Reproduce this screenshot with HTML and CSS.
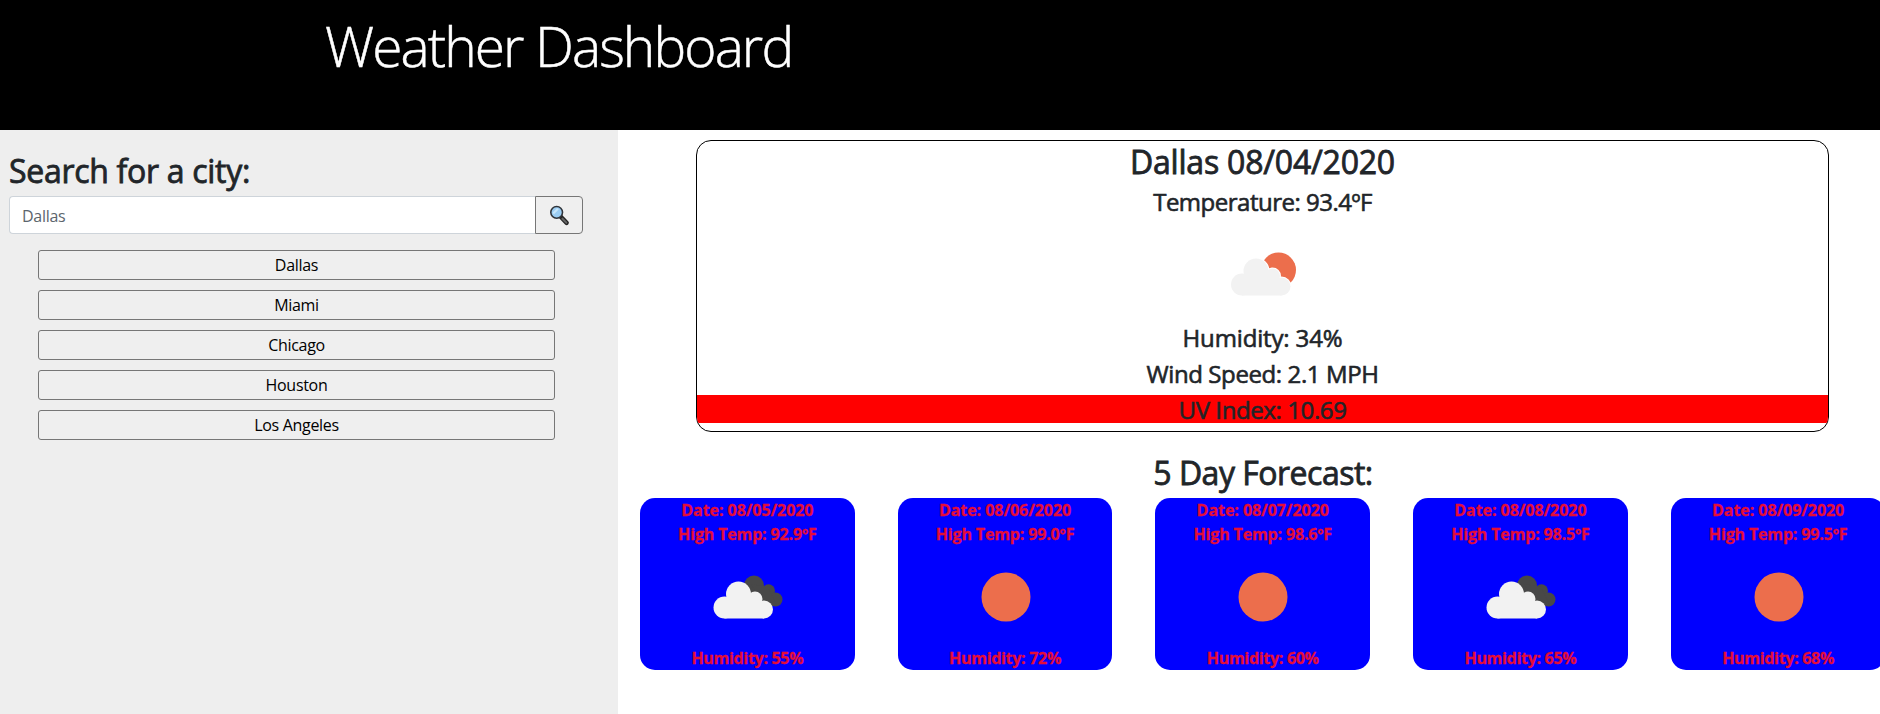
FILE: index.html
```html
<!DOCTYPE html>
<html lang="en">
<head>
<meta charset="utf-8">
<title>Weather Dashboard</title>
<link rel="stylesheet" href="styles.css">
</head>
<body>
<svg class="defs" width="0" height="0" aria-hidden="true">
  <symbol id="sun" viewBox="0 0 100 100"><circle cx="50" cy="50" r="24.500" fill="#ec6e4c"/></symbol>
  <symbol id="cloud" viewBox="0 0 100 100">
    <circle cx="26.500" cy="60.500" r="11"/><circle cx="40.500" cy="47" r="12.500"/><circle cx="57" cy="52" r="7.500"/><circle cx="66" cy="62.500" r="9"/><path d="M26.500 52L40 42L57 50L66 58V71.500H26.500z"/>
  </symbol>
  <symbol id="few" viewBox="0 0 100 100">
    <circle cx="65.500" cy="46" r="17.500" fill="#ec6e4c"/>
    <use href="#cloud" x="2.500" width="100" height="100" fill="#fff" stroke="#fff" stroke-width="2"/>
    <use href="#cloud" x="2.500" width="100" height="100" fill="#f2f2f2"/>
  </symbol>
  <symbol id="broken" viewBox="0 0 100 100">
    <g fill="#484848"><circle cx="56" cy="38.500" r="10"/><circle cx="70.500" cy="43.800" r="6.500"/><circle cx="77.500" cy="52.500" r="7"/><path d="M53 37L70 40L79 59H66z"/></g>
    <use href="#cloud" width="100" height="100" fill="#f2f2f2"/>
  </symbol>
</svg>
<header class="banner"><h1 class="title">Weather Dashboard</h1></header>
<div class="layout">
  <aside class="sidebar">
    <h2 class="heading search-heading">Search for a city:</h2>
    <div class="search">
      <input class="search-input" type="text" placeholder="Dallas">
      <button class="search-button" aria-label="Search">
        <svg width="21" height="21" viewBox="0 0 20 20"><path d="M11 11L16.800 17" stroke="#222" stroke-width="4.200" stroke-linecap="round"/><path d="M12.800 13L16.500 16.800" stroke="#666" stroke-width="2" stroke-linecap="round"/><circle cx="7.300" cy="7" r="5.600" fill="#9bcdf3" stroke="#30343a" stroke-width="1.500"/><path d="M4 8L8.500 3.500" stroke="#c8e6fb" stroke-width="2"/></svg>
      </button>
    </div>
    <div class="cities">
      <button class="city">Dallas</button>
      <button class="city">Miami</button>
      <button class="city">Chicago</button>
      <button class="city">Houston</button>
      <button class="city">Los Angeles</button>
    </div>
  </aside>
  <main class="main">
    <section class="current">
      <h2 class="heading place">Dallas 08/04/2020</h2>
      <p class="stat temperature">Temperature: 93.4ºF</p>
      <svg class="icon"><use href="#few"/></svg>
      <p class="stat humidity">Humidity: 34%</p>
      <p class="stat wind">Wind Speed: 2.1 MPH</p>
      <p class="stat uv">UV Index: 10.69</p>
    </section>
    <h2 class="heading forecast-heading">5 Day Forecast:</h2>
    <section class="forecast">
      <article class="day"><p class="date">Date: 08/05/2020</p><p class="temp">High Temp: 92.9ºF</p><svg class="icon"><use href="#broken"/></svg><p>Humidity: 55%</p></article>
      <article class="day"><p class="date">Date: 08/06/2020</p><p class="temp">High Temp: 99.0ºF</p><svg class="icon"><use href="#sun"/></svg><p>Humidity: 72%</p></article>
      <article class="day"><p class="date">Date: 08/07/2020</p><p class="temp">High Temp: 98.6ºF</p><svg class="icon"><use href="#sun"/></svg><p>Humidity: 60%</p></article>
      <article class="day"><p class="date">Date: 08/08/2020</p><p class="temp">High Temp: 98.5ºF</p><svg class="icon"><use href="#broken"/></svg><p>Humidity: 65%</p></article>
      <article class="day"><p class="date">Date: 08/09/2020</p><p class="temp">High Temp: 99.5ºF</p><svg class="icon"><use href="#sun"/></svg><p>Humidity: 68%</p></article>
    </section>
  </main>
</div>
</body>
</html>
```
FILE: styles.css
```css
* { box-sizing: border-box; }
body { margin: 0; height: 714px; overflow: hidden; display: flex; flex-direction: column; background: #fff; color: #212529; font: 16px/24px "Open Sans", "Noto Sans", sans-serif; }
h1, h2, p { margin: 0; }
.defs { position: absolute; }
.banner { height: 130px; flex: none; background: #000; padding: 12px 0 0 325px; }
.title { color: #fff; font-size: 55px; line-height: 67px; font-weight: 300; letter-spacing: -1.900px; white-space: nowrap; -webkit-text-stroke: 0.5px #fff; }
.layout { flex: 1; display: flex; }
.sidebar { width: 618px; flex: none; background: #eee; padding: 22px 35px 0 9px; }
.heading { font-size: 32px; line-height: 38px; font-weight: 500; letter-spacing: -0.5px; white-space: nowrap; -webkit-text-stroke: 0.8px currentColor; }
.search-heading { letter-spacing: -0.3px; }
.search { display: flex; height: 38px; margin-top: 6px; }
.search-input { flex: 1; border: 1px solid #ced4da; border-right: 0; border-radius: 4px 0 0 4px; padding: 2px 12px 0; font: inherit; letter-spacing: -0.3px; background: #fff; }
.search-input::placeholder { color: #5c656d; opacity: 1; }
.search-button { width: 48px; border: 1px solid #767676; border-radius: 0 4px 4px 0; background: #efefef; display: grid; place-items: center; padding: 0 0 0 1px; }
.cities { display: grid; gap: 10px; margin: 16px 28px 0 29px; }
.city { height: 30px; border: 1px solid #767676; border-radius: 3px; background: #efefef; color: #000; font: inherit; letter-spacing: -0.3px; padding: 0; }
.main { width: 1262px; flex: none; padding: 10px 0 0; overflow: hidden; }
.current { width: 1133px; height: 292px; margin-left: 78px; border: 1px solid #000; border-radius: 15px; display: flex; flex-direction: column; align-items: center; overflow: hidden; }
.place { margin-top: 2px; letter-spacing: -0.200px; }
.stat { flex: none; font-size: 24px; line-height: 28px; font-weight: 500; letter-spacing: -0.4px; width: 100%; text-align: center; -webkit-text-stroke: 0.600px currentColor; }
.temperature { margin-top: 7px; letter-spacing: -0.500px; }
.humidity { letter-spacing: -0.150px; }
.icon { width: 100px; height: 100px; display: block; flex: none; }
.current .icon { margin: 8px 0 0; }
.wind { margin-top: 8px; }
.uv { margin-top: 7px; padding-top: 1px; height: 28px; background: #f00; }
.forecast-heading { text-align: center; margin: 22px 0 6px; padding-left: 28px; }
.forecast { display: flex; gap: 43px; padding-left: 22px; }
.day { width: 214.700px; height: 172px; flex: none; border-radius: 15px; background: #00f; color: #e40d38; font-weight: 700; letter-spacing: -0.300px; display: flex; flex-direction: column; align-items: center; -webkit-text-stroke: 0.3px currentColor; }
.day .icon { margin: 1px 0 -1px 1px; }
.day p { white-space: nowrap; }
.date { letter-spacing: -0.050px; }
.temp { letter-spacing: -0.150px; }
```
